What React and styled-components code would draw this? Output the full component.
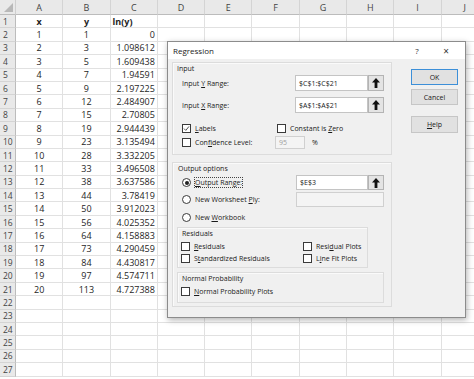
import styled, { createGlobalStyle } from 'styled-components';

const GlobalStyle = createGlobalStyle`
  html, body {
    margin: 0;
    padding: 0;
    background: #ffffff;
    overflow: hidden;
  }
`;

const COLUMNS = ['A', 'B', 'C', 'D', 'E', 'F', 'G', 'H', 'I', 'J'];
const Y_VALUES = [1, 3, 5, 7, 9, 12, 15, 19, 23, 28, 33, 38, 44, 50, 56, 64, 73, 84, 97, 113];
const LN_VALUES = [
  '0', '1.098612', '1.609438', '1.94591', '2.197225', '2.484907', '2.70805',
  '2.944439', '3.135494', '3.332205', '3.496508', '3.637586', '3.78419',
  '3.912023', '4.025352', '4.158883', '4.290459', '4.430817', '4.574711', '4.727388',
];
const ROW_COUNT = 27;

const Page = styled.div`
  position: relative;
  width: 474px;
  height: 379px;
  overflow: hidden;
`;

const Sheet = styled.div`
  display: grid;
  grid-template-columns: 16px repeat(10, 47.3px);
  grid-template-rows: 15px repeat(${ROW_COUNT}, 13.4px);
  font-family: 'Open Sans', 'Noto Sans', sans-serif;
  font-size: 9px;
  color: #1e1e1e;
`;

const Corner = styled.div`
  position: relative;
  background: #e9e9e9;
  border-right: 1px solid #cfcfcf;
  border-bottom: 1px solid #bcbcbc;
  box-sizing: border-box;

  &::after {
    content: '';
    position: absolute;
    right: 2px;
    bottom: 2px;
    border-left: 9px solid transparent;
    border-bottom: 9px solid #b8b8b8;
  }
`;

const ColHeader = styled.div`
  display: flex;
  align-items: center;
  justify-content: center;
  background: #e9e9e9;
  border-right: 1px solid #d4d4d4;
  border-bottom: 1px solid #bcbcbc;
  box-sizing: border-box;
  color: #444;
`;

const RowHeader = styled.div`
  display: flex;
  align-items: center;
  padding-left: 3px;
  background: #e9e9e9;
  border-right: 1px solid #bcbcbc;
  border-bottom: 1px solid #d4d4d4;
  box-sizing: border-box;
  color: #444;
  font-size: 8.5px;
`;

const Cell = styled.div`
  display: flex;
  align-items: center;
  justify-content: ${(p) => p.$align || 'flex-start'};
  padding: 0 2px;
  border-right: 1px solid #e1e1e1;
  border-bottom: 1px solid #e1e1e1;
  box-sizing: border-box;
  font-weight: ${(p) => (p.$bold ? 700 : 400)};
  white-space: nowrap;
  overflow: hidden;
`;

/* ---------- dialog ---------- */

const Dialog = styled.div`
  position: absolute;
  left: 167px;
  top: 41px;
  width: 299px;
  height: 277px;
  box-sizing: border-box;
  border: 1px solid #8c8c8c;
  box-shadow: 1px 2px 6px rgba(0, 0, 0, 0.3);
  display: flex;
  flex-direction: column;
  font-family: 'Open Sans', 'Noto Sans', sans-serif;
  font-size: 7px;
  color: #1a1a1a;
`;

const TitleBar = styled.div`
  height: 17px;
  display: flex;
  align-items: center;
  padding-left: 5px;
  background: #ffffff;
  font-size: 8px;
`;

const TitleGlyph = styled.span`
  width: ${(p) => p.$w}px;
  margin-right: ${(p) => p.$mr || 0}px;
  text-align: center;
  font-size: ${(p) => p.$size || 8}px;
  color: #333;
`;

const TitleTools = styled.div`
  margin-left: auto;
  display: flex;
  align-items: center;
  padding-right: 9px;
`;

const Body = styled.div`
  flex: 1;
  display: flex;
  background: #f0f0f0;
  padding: 3px 7px 0 4px;
`;

const LeftCol = styled.div`
  width: 220px;
  display: flex;
  flex-direction: column;
`;

const RightCol = styled.div`
  margin-left: auto;
  width: 47px;
  display: flex;
  flex-direction: column;
`;

const Group = styled.div`
  width: ${(p) => (p.$w ? `${p.$w}px` : 'auto')};
  margin-top: ${(p) => p.$mt || 0}px;
  margin-left: ${(p) => p.$ml || 0}px;
  padding-bottom: ${(p) => p.$pb || 0}px;
  border: 1px solid #dcdcdc;
  box-shadow: inset 1px 1px 0 #fafafa;
  box-sizing: border-box;
  display: flex;
  flex-direction: column;
`;

const GroupTitle = styled.div`
  height: 11px;
  line-height: 11px;
  padding-left: ${(p) => p.$pl || 4}px;
`;

const Row = styled.div`
  height: ${(p) => p.$h}px;
  margin-top: ${(p) => p.$mt || 0}px;
  padding-left: ${(p) => p.$pl || 0}px;
  display: flex;
  align-items: center;
`;

const Field = styled.div`
  width: ${(p) => p.$w}px;
  flex-shrink: 0;
  display: flex;
  align-items: center;
  white-space: nowrap;
`;

const Text = styled.span`
  white-space: pre;
`;

const TextBox = styled.div`
  width: ${(p) => p.$w}px;
  height: ${(p) => p.$h}px;
  box-sizing: border-box;
  border: 1px solid ${(p) => (p.$disabled ? '#d0d0d0' : '#c4c4c4')};
  background: ${(p) => (p.$disabled ? '#f4f4f4' : '#ffffff')};
  color: ${(p) => (p.$disabled ? '#a0a0a0' : '#1a1a1a')};
  padding-left: 3px;
  display: flex;
  align-items: center;
`;

const RefButton = styled.div`
  width: 16px;
  height: ${(p) => p.$h}px;
  box-sizing: border-box;
  border: 1px solid #b4b4b4;
  background: #e4e4e4;
  display: flex;
  align-items: center;
  justify-content: center;
`;

const Box = styled.span`
  width: 9px;
  height: 9px;
  box-sizing: border-box;
  border: 1px solid #3a3a3a;
  background: #ffffff;
  border-radius: ${(p) => (p.$round ? '50%' : '0')};
  display: inline-flex;
  align-items: center;
  justify-content: center;
  margin-right: 4px;
  flex-shrink: 0;
`;

const Dot = styled.span`
  width: 4px;
  height: 4px;
  border-radius: 50%;
  background: #222;
`;

const Focus = styled.span`
  outline: 1px dotted #444;
  line-height: 9px;
  white-space: pre;
`;

const Key = styled.span`
  text-decoration: underline;
`;

const Suffix = styled.span`
  margin-left: 7px;
`;

const Button = styled.div`
  height: ${(p) => p.$h || 16}px;
  margin-top: ${(p) => p.$mt || 0}px;
  box-sizing: border-box;
  border: 1px solid ${(p) => (p.$primary ? '#3c8fd8' : '#c6c6c6')};
  background: #e1e1e1;
  display: flex;
  align-items: center;
  justify-content: center;
`;

function UpArrow() {
  return (
    <svg width="8" height="10" viewBox="0 0 8 10">
      <path d="M4 0 L8 4.5 L5.4 4.5 L5.4 10 L2.6 10 L2.6 4.5 L0 4.5 Z" fill="#111" />
    </svg>
  );
}

function Check({ checked }) {
  return (
    <Box>
      {checked && (
        <svg width="7" height="7" viewBox="0 0 7 7">
          <path d="M1 3.6 L2.8 5.4 L6 1.4" fill="none" stroke="#555" strokeWidth="1" />
        </svg>
      )}
    </Box>
  );
}

function Radio({ checked }) {
  return <Box $round>{checked && <Dot />}</Box>;
}

function Spreadsheet() {
  const rows = [];
  for (let r = 1; r <= ROW_COUNT; r++) {
    const i = r - 2;
    let a = '';
    let b = '';
    let c = '';
    if (r === 1) {
      a = 'x';
      b = 'y';
      c = 'ln(y)';
    } else if (i < Y_VALUES.length) {
      a = i + 1;
      b = Y_VALUES[i];
      c = LN_VALUES[i];
    }
    rows.push(
      <RowHeader key={`h${r}`}>{r}</RowHeader>,
      <Cell key={`a${r}`} $align="center" $bold={r === 1}>{a}</Cell>,
      <Cell key={`b${r}`} $align="center" $bold={r === 1}>{b}</Cell>,
      <Cell key={`c${r}`} $align={r === 1 ? 'flex-start' : 'flex-end'} $bold={r === 1}>{c}</Cell>,
      ...COLUMNS.slice(3).map((col) => <Cell key={`${col}${r}`} />)
    );
  }

  return (
    <Sheet>
      <Corner />
      {COLUMNS.map((col) => (
        <ColHeader key={col}>{col}</ColHeader>
      ))}
      {rows}
    </Sheet>
  );
}

function RegressionDialog() {
  return (
    <Dialog>
      <TitleBar>
        Regression
        <TitleTools>
          <TitleGlyph $w={12} $mr={13}>?</TitleGlyph>
          <TitleGlyph $w={20} $size={10}>×</TitleGlyph>
        </TitleTools>
      </TitleBar>
      <Body>
        <LeftCol>
          <Group $pb={5}>
            <GroupTitle>Input</GroupTitle>
            <Row $h={16} $mt={1} $pl={9}>
              <Field $w={113}><Text>Input <Key>Y</Key> Range:</Text></Field>
              <TextBox $w={73} $h={16}>$C$1:$C$21</TextBox>
              <RefButton $h={16}><UpArrow /></RefButton>
            </Row>
            <Row $h={16} $mt={6} $pl={9}>
              <Field $w={113}><Text>Input <Key>X</Key> Range:</Text></Field>
              <TextBox $w={73} $h={16}>$A$1:$A$21</TextBox>
              <RefButton $h={16}><UpArrow /></RefButton>
            </Row>
            <Row $h={12} $mt={9} $pl={9}>
              <Field $w={95}><Check checked /><Text><Key>L</Key>abels</Text></Field>
              <Field $w={100}><Check /><Text>Constant is <Key>Z</Key>ero</Text></Field>
            </Row>
            <Row $h={13} $mt={2} $pl={9}>
              <Field $w={93}><Check /><Text>Con<Key>f</Key>idence Level:</Text></Field>
              <TextBox $w={30} $h={13} $disabled>95</TextBox>
              <Suffix>%</Suffix>
            </Row>
          </Group>

          <Group $mt={7} $pb={3}>
            <GroupTitle $pl={5}>Output options</GroupTitle>
            <Row $h={15} $mt={1} $pl={9}>
              <Field $w={114}><Radio checked /><Focus><Key>O</Key>utput Range:</Focus></Field>
              <TextBox $w={72} $h={15}>$E$3</TextBox>
              <RefButton $h={15}><UpArrow /></RefButton>
            </Row>
            <Row $h={15} $mt={2} $pl={9}>
              <Field $w={114}><Radio /><Text>New Worksheet <Key>P</Key>ly:</Text></Field>
              <TextBox $w={88} $h={15} $disabled />
            </Row>
            <Row $h={12} $mt={4} $pl={9}>
              <Field $w={114}><Radio /><Text>New <Key>W</Key>orkbook</Text></Field>
            </Row>

            <Group $w={191} $ml={4} $mt={4} $pb={3}>
              <GroupTitle>Residuals</GroupTitle>
              <Row $h={12} $mt={1} $pl={3}>
                <Field $w={122}><Check /><Text><Key>R</Key>esiduals</Text></Field>
                <Field $w={60}><Check /><Text>Resi<Key>d</Key>ual Plots</Text></Field>
              </Row>
              <Row $h={12} $pl={3}>
                <Field $w={122}><Check /><Text>S<Key>t</Key>andardized Residuals</Text></Field>
                <Field $w={60}><Check /><Text>L<Key>i</Key>ne Fit Plots</Text></Field>
              </Row>
            </Group>

            <Group $w={207} $ml={4} $mt={4} $pb={5}>
              <GroupTitle>Normal Probability</GroupTitle>
              <Row $h={12} $mt={1} $pl={3}>
                <Field $w={150}><Check /><Text><Key>N</Key>ormal Probability Plots</Text></Field>
              </Row>
            </Group>
          </Group>
        </LeftCol>

        <RightCol>
          <Button $primary $mt={7}>OK</Button>
          <Button $mt={4}>Cancel</Button>
          <Button $mt={11} $h={17}><Key>H</Key>elp</Button>
        </RightCol>
      </Body>
    </Dialog>
  );
}

export default function App() {
  return (
    <Page>
      <GlobalStyle />
      <Spreadsheet />
      <RegressionDialog />
    </Page>
  );
}
